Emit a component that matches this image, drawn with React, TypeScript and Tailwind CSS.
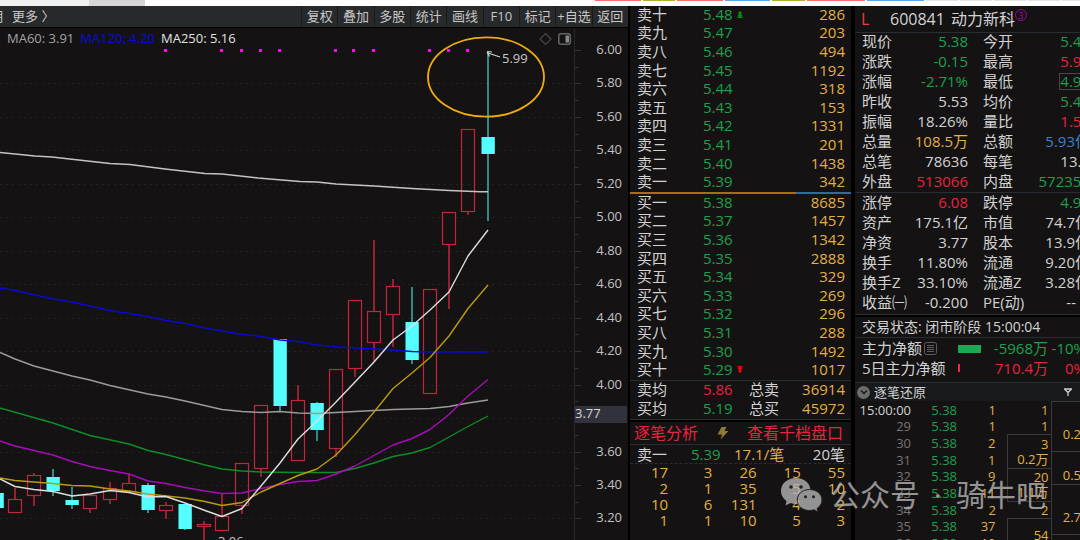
import React from "react";

const GREEN = "text-[#1da04d]";
const RED = "text-[#e8233f]";
const GOLD = "text-[#e2b044]";
const GREY = "text-[#d2d2d2]";
const BLUE = "text-[#3f7fd0]";

/* ---------- chart data ---------- */

type Candle = { x: number; top: number; bottom: number; high: number; low: number; down?: boolean };

const candles: Candle[] = [
  { x: -3, top: 493, bottom: 508, high: 493, low: 508, down: true },
  { x: 15, top: 499, bottom: 512, high: 488, low: 512 },
  { x: 34, top: 475, bottom: 495, high: 473, low: 506 },
  { x: 53, top: 477, bottom: 491, high: 469, low: 496, down: true },
  { x: 72, top: 500, bottom: 505, high: 487, low: 509, down: true },
  { x: 90, top: 495, bottom: 508, high: 495, low: 513 },
  { x: 110, top: 488, bottom: 499, high: 482, low: 504 },
  { x: 129, top: 483, bottom: 491, high: 474, low: 491 },
  { x: 148, top: 485, bottom: 510, high: 483, low: 513, down: true },
  { x: 166, top: 505, bottom: 510, high: 502, low: 519 },
  { x: 185, top: 504, bottom: 529, high: 504, low: 530, down: true },
  { x: 204, top: 524, bottom: 526, high: 521, low: 541 },
  { x: 222, top: 516, bottom: 530, high: 494, low: 530 },
  { x: 242, top: 463, bottom: 505, high: 463, low: 514 },
  { x: 261, top: 405, bottom: 468, high: 405, low: 477 },
  { x: 280, top: 339, bottom: 406, high: 339, low: 412, down: true },
  { x: 298, top: 400, bottom: 460, high: 385, low: 460 },
  { x: 317, top: 403, bottom: 430, high: 402, low: 441, down: true },
  { x: 336, top: 369, bottom: 448, high: 369, low: 457 },
  { x: 355, top: 300, bottom: 368, high: 300, low: 377 },
  { x: 374, top: 311, bottom: 342, high: 240, low: 362 },
  { x: 393, top: 286, bottom: 314, high: 279, low: 347 },
  { x: 412, top: 322, bottom: 360, high: 287, low: 364, down: true },
  { x: 430, top: 289, bottom: 393, high: 289, low: 393 },
  { x: 449, top: 212, bottom: 244, high: 212, low: 309 },
  { x: 468, top: 129, bottom: 211, high: 129, low: 215 },
  { x: 488, top: 137, bottom: 154, high: 52, low: 221, down: true },
];

const averages = [
  {
    color: "#0a0ad0",
    points:
      "0,288 15,290.5 53,299 72,302 110,310.5 148,316.5 166,320.5 185,323.5 205,328 222,331 240,334 261,336.5 280,340 298,341.5 317,345 336,346.7 355,348 374,349 393,350 412,351.5 430,352 488,352",
  },
  {
    color: "#9c9c9c",
    points:
      "0,352.5 15,359 34,366 72,376 90,380 110,385.5 148,394 166,397 185,401 222,409.5 242,411.5 261,412.5 280,411.5 298,413 317,413.5 336,412.5 374,410.5 393,409.5 430,408.5 449,406.5 468,403 488,400",
  },
  {
    color: "#0c8f26",
    points:
      "0,408 53,423 90,435.5 129,444 148,450.5 166,454.5 205,465 222,469 242,471 261,472 300,472.5 336,472.5 355,468.5 374,463 393,456.5 412,453 430,447.5 449,437 468,426.5 488,416",
  },
  {
    color: "#a80cb8",
    points:
      "0,441 15,446 34,450.5 53,455 72,461.5 90,466.5 110,470.5 129,474 148,481 166,483.5 185,487.5 205,491 222,493.5 242,493 261,488.5 280,484.5 298,481.5 317,480.5 336,474 355,466 374,455.5 393,445 412,438.5 430,429.5 449,414.5 468,396 488,379.5",
  },
  {
    color: "#b89c0a",
    points:
      "0,478 15,480.5 53,483.5 72,485.5 90,486 110,489 129,491 148,494 185,498 205,501.5 222,505.5 242,502.5 261,492 280,483.5 298,475.5 317,469 336,455 355,434.5 374,412 393,388.5 412,373 430,357.5 449,336 468,308.5 488,285",
  },
  {
    color: "#c4c4c4",
    points:
      "0,152.5 35,156 52,157 83,160.5 110,163.5 130,164.5 165,169 205,173.5 222,174 258,178 300,181.5 317,182 336,184 374,186 412,188.5 449,190.5 480,191.7 488,191.7",
  },
  {
    color: "#dedede",
    points:
      "0,479 15,486.5 34,489.5 53,491.5 72,496 90,494 110,490.5 129,492.5 148,497 166,496.5 185,503 205,510.5 222,516.5 242,508.5 261,486 280,463 298,439 317,421 336,402 355,382 374,362 393,340 412,326 430,310 449,292 468,256 488,230",
  },
];

const signals = [166, 222, 242, 261, 280, 336, 354, 374, 430, 449, 468];
const axisPrices = [6, 5.8, 5.6, 5.4, 5.2, 5, 4.8, 4.6, 4.4, 4.2, 4, 3.8, 3.6, 3.4, 3.2];
const priceY = (p: number) => Math.round(50 + (6 - p) * 167.3);

function Chart() {
  return (
    <svg
      viewBox="0 28 628 512"
      preserveAspectRatio="xMaxYMin slice"
      className="block h-[512px] w-full"
      role="img"
      aria-label="日K线"
      fontFamily='"Open Sans", sans-serif'
      fontSize="13"
    >
      {axisPrices.slice(1).map((p) => (
        <line key={p} x1="0" x2="572" y1={priceY(p) + 0.5} y2={priceY(p) + 0.5} stroke="#242223" strokeDasharray="2 4" />
      ))}
      <line x1="574.5" x2="574.5" y1="29" y2="540" stroke="#262932" />
      {axisPrices.map((p) => (
        <g key={p} stroke="#30343c">
          <line x1="575" x2="581" y1={priceY(p) + 0.5} y2={priceY(p) + 0.5} />
          {p > 3.3 && <line x1="575" x2="578" y1={priceY(p - 0.1) + 0.5} y2={priceY(p - 0.1) + 0.5} />}
        </g>
      ))}
      {axisPrices
        .filter((p) => p !== 3.8)
        .map((p) => (
          <text key={p} x="622" y={priceY(p) + 4} textAnchor="end" fill="#c2c2c2">
            {p.toFixed(2)}
          </text>
        ))}
      <rect x="575" y="406" width="52" height="17" fill="#32323c" />
      <text x="575" y="418" fill="#d6d6d6">
        3.77
      </text>

      {signals.map((x) => (
        <rect key={x} x={x - 2} y="49" width="3" height="3" fill="#f20cf2" />
      ))}

      {candles.map((c) => {
        const stroke = c.down ? "#3fb0b0" : "#c0263c";
        return (
          <g key={c.x} stroke={stroke}>
            <line x1={c.x} x2={c.x} y1={c.high} y2={c.top} strokeWidth="1.5" />
            <line x1={c.x} x2={c.x} y1={c.bottom} y2={c.low} strokeWidth="1.5" />
            {c.down ? (
              <rect x={c.x - 6.5} y={c.top} width="13.300" height={c.bottom - c.top} fill="#54ffff" stroke="none" />
            ) : (
              <rect x={c.x - 6.5} y={c.top + 0.5} width="13" height={c.bottom - c.top} fill="none" strokeWidth="1.2" />
            )}
          </g>
        );
      })}

      {averages.map((a) => (
        <polyline key={a.color} points={a.points} fill="none" stroke={a.color} strokeWidth="1.4" strokeLinejoin="round" />
      ))}

      <ellipse cx="486" cy="77" rx="58" ry="39.7" fill="none" stroke="#f0ac0c" strokeWidth="1.8" />
      <path d="M500 57 L488 53 M487 51.5 L492 52 M487 52 L489.5 56.5" stroke="#d4d4d4" strokeWidth="1.2" fill="none" />
      <text x="502" y="63" fill="#c8c8c8">
        5.99
      </text>
      <text x="218" y="546" fill="#c8c8c8">
        3.06
      </text>

      <path d="M545.5 33.5 L551 39 L545.5 44.5 L540 39 Z" fill="none" stroke="#4a4a4a" strokeWidth="1.2" />
      <rect x="558.8" y="33.8" width="11.5" height="10.5" rx="2" fill="none" stroke="#646464" strokeWidth="1.5" />
      <rect x="565.5" y="35.5" width="3.5" height="7" fill="#8a8a8a" />
    </svg>
  );
}

/* ---------- order book ---------- */

const digits = ["一", "二", "三", "四", "五", "六", "七", "八", "九", "十"];
const sells: [string, string, string][] = [
  ["卖十", "5.48", "286"],
  ["卖九", "5.47", "203"],
  ["卖八", "5.46", "494"],
  ["卖七", "5.45", "1192"],
  ["卖六", "5.44", "318"],
  ["卖五", "5.43", "153"],
  ["卖四", "5.42", "1331"],
  ["卖三", "5.41", "201"],
  ["卖二", "5.40", "1438"],
  ["卖一", "5.39", "342"],
];
const buyVolumes = ["8685", "1457", "1342", "2888", "329", "269", "296", "288", "1492", "1017"];
const buys = buyVolumes.map((v, i): [string, string, string] => ["买" + digits[i], (5.38 - i * 0.01).toFixed(2), v]);

function LimitMark({ down }: { down?: boolean }) {
  return (
    <svg viewBox="0 0 6 7" className={down ? "h-[7px] w-1.5 rotate-180" : "h-[7px] w-1.5"} aria-hidden="true">
      <path d="M3 0 L5.500 2.600 H4 V3.200 L6 5.400 H4 V6 H5.500 V7 H0.500 V6 H2 V5.400 H0 L2 3.200 V2.600 H0.500 Z" fill={down ? "#f00808" : "#089008"} />
    </svg>
  );
}

function Book({ rows, label }: { rows: [string, string, string][]; label: string }) {
  return (
    <table className="h-[186px] w-full table-fixed text-[15px] leading-[15px]" aria-label={label}>
      <colgroup>
        <col className="w-[73px]" />
        <col className="w-[60px]" />
        <col />
      </colgroup>
      <tbody>
        {rows.map(([name, price, volume]) => (
          <tr key={name}>
            <th scope="row" className={`p-0 pb-0.5 pl-[7px] text-left font-normal ${GREY}`}>{name}</th>
            <td className={`p-0 pb-0.5 ${GREEN}`}>
              <span className="flex items-center gap-1">
                {price}
                {name === "卖十" && <LimitMark />}
                {name === "买十" && <LimitMark down />}
              </span>
            </td>
            <td className={`p-0 pr-1.5 pb-0.5 text-right ${GOLD}`}>{volume}</td>
          </tr>
        ))}
      </tbody>
    </table>
  );
}

const queue = [
  ["17", "3", "26", "15", "55"],
  ["2", "1", "35", "5", "10"],
  ["10", "6", "131", "4", "2"],
  ["1", "1", "10", "5", "3"],
];

function OrderPanel() {
  return (
    <section className="flex w-[223px] shrink-0 flex-col border-r-2 border-black">
      <Book rows={sells} label="卖盘" />
      <div className="grid h-0.5 grid-cols-4">
        <span className="col-span-3 bg-[#a56e1c]" />
        <span className="bg-[#2c6ca0]" />
      </div>
      <Book rows={buys} label="买盘" />
      <table className="h-10 w-full table-fixed border-y border-[#2a2d33] text-[15px] leading-[15px]">
        <colgroup>
          <col className="w-[73px]" />
          <col className="w-[46px]" />
          <col className="w-[40px]" />
          <col />
        </colgroup>
        <tbody>
          <tr>
            <th scope="row" className={`p-0 pb-0.5 pl-[7px] text-left font-normal ${GREY}`}>卖均</th>
            <td className={`p-0 pb-0.5 ${RED}`}>5.86</td>
            <th scope="row" className={`p-0 pb-0.5 text-left font-normal ${GREY}`}>总卖</th>
            <td className={`p-0 pr-1.5 pb-0.5 text-right ${GOLD}`}>36914</td>
          </tr>
          <tr>
            <th scope="row" className={`p-0 pb-0.5 pl-[7px] text-left font-normal ${GREY}`}>买均</th>
            <td className={`p-0 pb-0.5 ${GREEN}`}>5.19</td>
            <th scope="row" className={`p-0 pb-0.5 text-left font-normal ${GREY}`}>总买</th>
            <td className={`p-0 pr-1.5 pb-0.5 text-right ${GOLD}`}>45972</td>
          </tr>
        </tbody>
      </table>
      <div className={`flex h-[25px] items-center justify-between border-t-2 border-b border-t-black border-b-[#2a2d33] pr-2 pl-1 text-base leading-4 ${RED}`}>
        <button type="button">逐笔分析</button>
        <svg viewBox="0 0 12 13" className="h-[13px] w-3" aria-hidden="true">
          <path d="M4.500 0 H9.500 L7.500 4 H11.500 L3.500 12.500 L5 7.500 H0.500 Z" fill="#8d7a34" />
        </svg>
        <button type="button">查看千档盘口</button>
      </div>
      <div className="flex h-[19px] items-center border-b border-dashed border-[#2a2d33] pr-1.5 pl-[7px] text-[15px] leading-[15px]">
        <span className={`w-[54px] ${GREY}`}>卖一</span>
        <span className={`w-[43px] ${GREEN}`}>5.39</span>
        <span className={GOLD}>17.1/笔</span>
        <span className={`ml-auto ${GREY}`}>20笔</span>
      </div>
      <table className={`h-[64px] w-full table-fixed text-[15px] leading-[15px] ${GOLD}`} aria-label="委托队列">
        <tbody>
          {queue.map((row, i) => (
            <tr key={i}>
              {row.map((v, j) => (
                <td key={j} className="p-0 pr-1.5 text-right">{v}</td>
              ))}
            </tr>
          ))}
        </tbody>
      </table>
    </section>
  );
}

/* ---------- quote ---------- */

type Quote = [string, string, string, string, string, string];
const quoteTop: Quote[] = [
  ["现价", "5.38", GREEN, "今开", "5.48", GREEN],
  ["涨跌", "-0.15", GREEN, "最高", "5.99", RED],
  ["涨幅", "-2.71%", GREEN, "最低", "4.98", GREEN],
  ["昨收", "5.53", GREY, "均价", "5.46", GREEN],
  ["振幅", "18.26%", GREY, "量比", "1.54", RED],
  ["总量", "108.5万", GOLD, "总额", "5.93亿", BLUE],
  ["总笔", "78636", GREY, "每笔", "13.8", GREY],
  ["外盘", "513066", RED, "内盘", "572350", GREEN],
];
const quoteBottom: Quote[] = [
  ["涨停", "6.08", RED, "跌停", "4.98", GREEN],
  ["资产", "175.1亿", GREY, "市值", "74.7亿", GREY],
  ["净资", "3.77", GREY, "股本", "13.9亿", GREY],
  ["换手", "11.80%", GREY, "流通", "9.20亿", GREY],
  ["换手Z", "33.10%", GREY, "流通Z", "3.28亿", GREY],
  ["收益㈠", "-0.200", GREY, "PE(动)", "--", GREY],
];

function QuoteTable({ rows, tall }: { rows: Quote[]; tall?: boolean }) {
  return (
    <table className={`w-full table-fixed border-b border-[#2a2d33] text-[15px] leading-[15px] whitespace-nowrap ${tall ? "h-[160px]" : "h-[122px]"}`}>
      <colgroup>
        <col className="w-[57px]" />
        <col className="w-[56px]" />
        <col className="w-[66px]" />
        <col />
      </colgroup>
      <tbody>
        {rows.map(([a, av, ac, b, bv, bc]) => (
          <tr key={a}>
            <th scope="row" className={`p-0 pb-0.5 pl-[7px] text-left font-normal ${GREY}`}>{a}</th>
            <td className={`p-0 pb-0.5 ${ac}`}>
              <span className="flex justify-end">{av}</span>
            </td>
            <th scope="row" className={`p-0 pb-0.5 pl-[15px] text-left font-normal ${GREY}`}>{b}</th>
            <td className={`p-0 pr-1.5 pb-0.5 ${bc}`}>
              <span className={bv === "--" ? "flex justify-end pr-3.5" : "flex justify-end"}>
                {b === "最低" ? <span className="outline outline-[#48484c]">{bv}</span> : bv}
              </span>
            </td>
          </tr>
        ))}
      </tbody>
    </table>
  );
}

const BOX = "border border-r-0 border-[#3a3a3c]";

function Stack({ first, second }: { first?: string; second?: string }) {
  return (
    <span className="flex flex-col items-end leading-[15px]">
      <span className="h-[15px]">{first}</span>
      <span className="h-[15px]">{second}</span>
    </span>
  );
}

type Tick = { time: string; volume: string; amount?: React.ReactNode; big?: React.ReactNode };
const single = (v: string) => <td className="p-0 pr-0.5 text-right">{v}</td>;
const pair = (a: string, b: string) => (
  <td rowSpan={2} className={`p-0 pr-0.5 ${BOX}`}>
    <Stack first={a} second={b} />
  </td>
);
const ticks: Tick[] = [
  { time: "15:00:00", volume: "1", amount: single("1"), big: <td rowSpan={3} className={`p-0 pr-0.5 ${BOX}`}><Stack second="0.2万" /></td> },
  { time: "29", volume: "1", amount: single("1") },
  { time: "30", volume: "2", amount: pair("3", "0.2万") },
  { time: "31", volume: "1", big: <td rowSpan={2} className={`p-0 pr-0.5 ${BOX}`}><Stack second="0.5万" /></td> },
  { time: "32", volume: "9", amount: pair("20", "1.1万") },
  { time: "33", volume: "11", big: <td rowSpan={3} className={`p-0 pr-0.5 ${BOX}`}><Stack second="2.7万" /></td> },
  { time: "34", volume: "2", amount: single("2") },
  {
    time: "35",
    volume: "37",
    amount: (
      <td rowSpan={2} className={`p-0 pt-2.5 pr-0.5 text-right align-top ${BOX}`}>
        54
      </td>
    ),
  },
  { time: "36", volume: "19", big: <td className={`p-0 ${BOX}`} /> },
];

function QuotePanel() {
  return (
    <section className="flex w-[243px] shrink-0 flex-col border-l-2 border-black">
      <header className={`flex h-[27px] items-center border-b border-[#2a2d33] pl-1.5 text-base leading-4 ${GREY}`}>
        <span className="w-[29px] text-[#f03c3c]">L</span>
        <h1 className="flex items-start gap-1.5">
          <span>600841</span>
          <span>动力新科</span>
        </h1>
        <span className="mb-2 flex size-3 items-center justify-center rounded-full border border-[#8c0c98] text-[9px] leading-none text-[#a80cb8]">3</span>
      </header>
      <QuoteTable rows={quoteTop} tall />
      <QuoteTable rows={quoteBottom} />
      <p className={`flex h-[23px] items-center border-t-2 border-b border-t-black border-b-[#2a2d33] pl-[7px] text-sm leading-[14px] ${GREY}`}>
        交易状态: 闭市阶段 15:00:04
      </p>
      <div className="border-b border-[#2a2d33] pt-px pb-1">
        <table className="h-[39px] w-full table-fixed text-[15px] leading-[15px] whitespace-nowrap">
          <colgroup>
            <col className="w-[103px]" />
            <col className="w-[90px]" />
            <col />
          </colgroup>
          <tbody>
            <tr>
              <th scope="row" className={`p-0 pl-[7px] text-left font-normal ${GREY}`}>
                <span className="flex items-center gap-0.5">
                  主力净额
                  <svg viewBox="0 0 13 13" className="size-[13px]" fill="none" stroke="#5c5c5c" aria-hidden="true">
                    <rect x="0.5" y="0.5" width="12" height="12" rx="2" />
                    <path d="M3 3.5H10M3 5.5H10M3 7.5H10M3 9.5H10" />
                  </svg>
                </span>
              </th>
              <td className={`p-0 ${GREEN}`}>
                <span className="flex items-center justify-between">
                  <span className="h-2 w-[23px] bg-[#1fa854]" />
                  -5968万
                </span>
              </td>
              <td className={`p-0 pr-2.5 text-right ${GREEN}`}>-10%</td>
            </tr>
            <tr>
              <th scope="row" className={`p-0 pl-[7px] text-left font-normal ${GREY}`}>5日主力净额</th>
              <td className={`p-0 ${RED}`}>
                <span className="flex items-center justify-between">
                  <span className="h-2 w-0.5 bg-[#f02848]" />
                  710.4万
                </span>
              </td>
              <td className={`p-0 pr-2.5 text-right ${RED}`}>0%</td>
            </tr>
          </tbody>
        </table>
      </div>
      <div className={`flex h-[18px] items-center bg-[#18191b] pr-6 pl-0.5 text-[13px] leading-[13px] ${GREY}`}>
        <button type="button" aria-label="收起" className="mr-1 flex size-[13px] items-center justify-center rounded-full bg-[#6c6c6c]">
          <svg viewBox="0 0 8 8" className="size-2" fill="none" stroke="#1a1a1a" strokeWidth="1.5">
            <path d="M1 2.5 L4 5.5 L7 2.5" />
          </svg>
        </button>
        <h2>逐笔还原</h2>
        <button type="button" aria-label="筛选" className="ml-auto">
          <svg viewBox="0 0 8 8" className="size-2" fill="none" stroke="#cbcbcb" strokeWidth="1.3">
            <path d="M0.5 1 H7.5 L4 4.5 Z M4 4 V8" />
          </svg>
        </button>
      </div>
      <table className={`w-full table-fixed text-[13px] leading-[13px] ${GOLD}`} aria-label="逐笔成交">
        <colgroup>
          <col className="w-[56px]" />
          <col className="w-[46px]" />
          <col className="w-[50px]" />
          <col className="w-[44px]" />
          <col />
        </colgroup>
        <tbody>
          {ticks.map((t, i) => (
            <tr key={t.time} className={i % 3 === 1 ? "h-4" : "h-[17px]"}>
              <td className={i === 0 ? `p-0 text-right ${GREY}` : "p-0 text-right text-[#747474]"}>{t.time}</td>
              <td className={`p-0 text-right ${GREEN}`}>5.38</td>
              <td className="p-0 pr-[11px] text-right">{t.volume}</td>
              {t.amount}
              {t.big}
            </tr>
          ))}
        </tbody>
      </table>
    </section>
  );
}

/* ---------- page ---------- */

const tools = ["复权", "叠加", "多股", "统计", "画线", "F10", "标记", "+自选", "返回"];

function BrowserStrip() {
  return (
    <div className="flex h-1.5 w-full items-start overflow-hidden bg-white">
      <span className="h-full w-[89px] bg-[#f1f1f1]" />
      <span className="h-full w-14 bg-[#d6d6d6]" />
      <span className="-mr-3.5 ml-auto flex h-px gap-0.5">
        <span className="w-[46px] bg-[#f87168]" />
        <span className="w-8 bg-[#b0b02c]" />
        <span className="w-[46px] bg-[#f87168]" />
        <span className="w-[45px] bg-[#58a6f0]" />
        <span className="w-[33px] bg-[#b0b02c]" />
        <span className="w-[58px] bg-[#f87168]" />
        <span className="w-[57px] bg-[#58a6f0]" />
        <span className="w-8 bg-[#e4e4e4]" />
        <span className="w-8 bg-[#e4e4e4]" />
        <span className="w-8 bg-[#e4e4e4]" />
        <span className="w-8 bg-[#e4e4e4]" />
        <span className="w-8 bg-[#e4e4e4]" />
      </span>
    </div>
  );
}

export default function App() {
  return (
    <div className="relative h-screen min-h-[540px] overflow-hidden bg-[#141213] font-['Open_Sans','Noto_Sans_CJK_SC',sans-serif]">
      <BrowserStrip />
      <main className="-mr-4 flex">
        <section className="flex min-w-0 flex-1 flex-col border-r-2 border-black">
          <nav className="flex h-[22px] items-center overflow-hidden border-b border-black bg-[#27292b] text-[13px] leading-[13px] text-[#c8c8c8]">
            <span className="-ml-2.5 w-[22px]">明</span>
            <button type="button" className="whitespace-nowrap">更多 〉</button>
            <div className="ml-auto grid h-full w-[327px] grid-cols-9">
              {tools.map((t) => (
                <button key={t} type="button" className="border-l border-[#18191a] text-center whitespace-nowrap">
                  {t}
                </button>
              ))}
            </div>
          </nav>
          <div className="relative">
            <Chart />
            <div className="absolute top-0 left-0 flex h-5 items-center gap-1.5 text-[13px] leading-[13px] whitespace-nowrap">
              <span className="flex w-px justify-end text-[#0c8f26]">:</span>
              <span className="text-[#a4a4a4]">MA60: 3.91</span>
              <span className="text-[#0a0ae0]">MA120: 4.20</span>
              <span className="text-[#e2e2e2]">MA250: 5.16</span>
            </div>
          </div>
        </section>
        <OrderPanel />
        <QuotePanel />
      </main>
      <div className="pointer-events-none absolute right-[34px] bottom-7 flex items-center gap-2 text-[#b4b4b4] opacity-80">
        <svg viewBox="0 0 41 34" className="h-[34px] w-[41px]" aria-hidden="true">
          <path
            d="M15 0 C6.5 0 0 5.500 0 13 C0 17 2 20.500 5.500 23 L4.500 27.500 L9.500 25 C11.300 25.600 13 26 15 26 C23.500 26 29.500 20 29.500 13 C29.500 5.500 23.500 0 15 0 Z"
            fill="currentColor"
          />
          <path
            d="M28.500 11.500 C21.500 11.500 16.300 16 16.300 22 C16.300 28 21.500 32.500 28.500 32.500 C30 32.500 31.500 32.200 33 31.800 L37 34 L36 30.500 C39 28.500 41 25.500 41 22 C41 16 35.500 11.500 28.500 11.500 Z"
            fill="currentColor"
            stroke="#242223"
            strokeWidth="1"
          />
          <g fill="#242223">
            <circle cx="10" cy="9" r="1.8" />
            <circle cx="20" cy="9" r="1.8" />
            <circle cx="24.500" cy="18.700" r="1.500" />
            <circle cx="32.500" cy="18.700" r="1.500" />
          </g>
        </svg>
        <p className="flex items-center gap-3.5 text-[30px] leading-[30px]">
          <span>公众号</span>
          <span>·</span>
          <span>骑牛吧</span>
        </p>
      </div>
    </div>
  );
}
